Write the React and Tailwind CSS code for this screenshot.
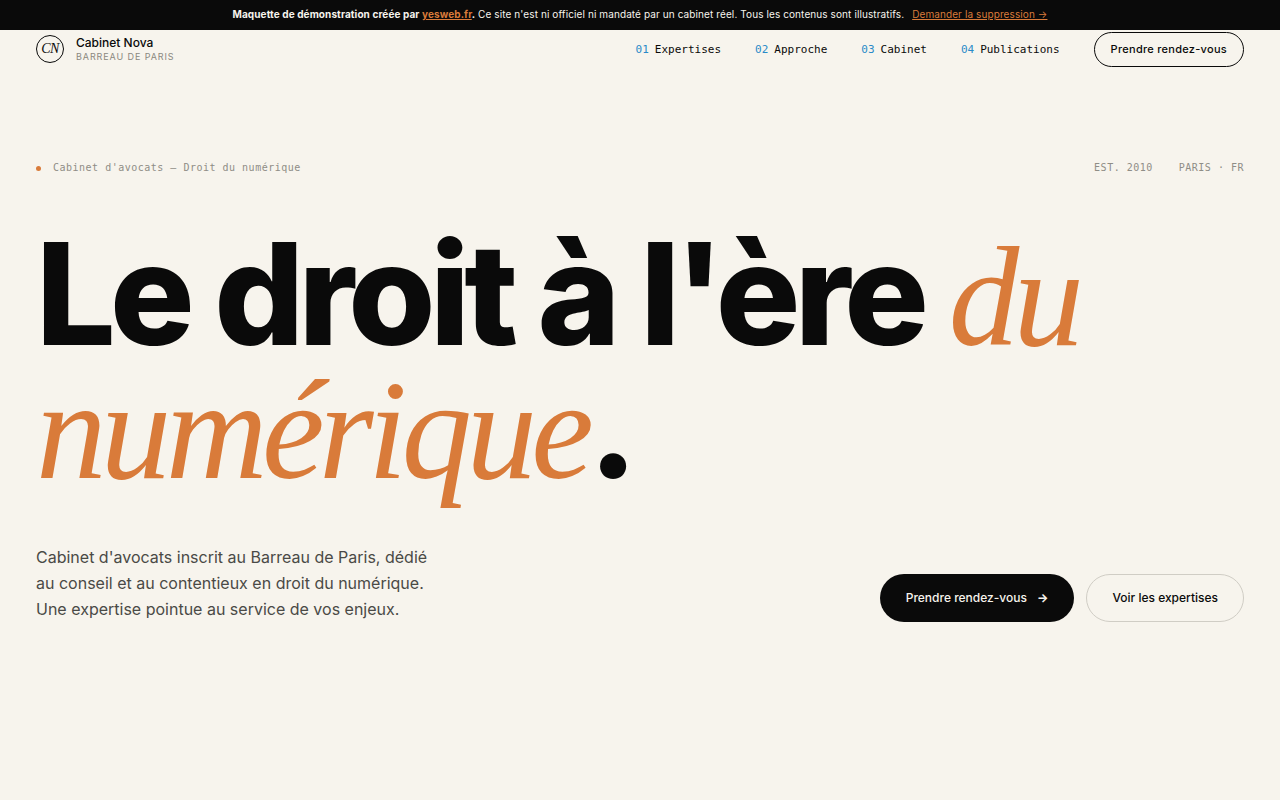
const navItems = [
  { num: "01", label: "Expertises", href: "#expertises" },
  { num: "02", label: "Approche", href: "#approche" },
  { num: "03", label: "Cabinet", href: "#cabinet" },
  { num: "04", label: "Publications", href: "#publications" },
];

function DemoBanner() {
  return (
    <div className="flex min-h-[30px] flex-wrap items-center justify-center bg-[#0a0a0a] px-4 pb-[2px] text-[10px] leading-4 tracking-[0.01em] text-[#f7f4ed]">
      <p>
        <strong className="font-bold">
          Maquette de démonstration créée par{" "}
          <a href="https://yesweb.fr" className="text-[#d97b3a] underline">
            yesweb.fr
          </a>
          .
        </strong>{" "}
        Ce site n'est ni officiel ni mandaté par un cabinet réel. Tous les contenus sont illustratifs.
      </p>
      <a href="#suppression" className="ml-2 text-[#d97b3a] underline">
        Demander la suppression →
      </a>
    </div>
  );
}

function Header() {
  return (
    <header className="flex flex-wrap items-center justify-between px-9 pt-[2px]">
      <a href="#accueil" className="flex items-center gap-3 pb-[2px]">
        <span className="flex size-7 items-center justify-center rounded-full border border-[#0a0a0a] font-['Liberation_Serif',serif] text-sm italic leading-none tracking-tighter">
          CN
        </span>
        <span className="flex flex-col">
          <span className="text-xs font-medium leading-4">Cabinet Nova</span>
          <span className="text-[9px] leading-3 tracking-widest text-[#8a8880]">BARREAU DE PARIS</span>
        </span>
      </a>
      <div className="flex flex-wrap items-center gap-[34px]">
        <nav className="flex flex-wrap items-center gap-[34px] font-['DejaVu_Sans_Mono',monospace] text-[11px] leading-4">
          {navItems.map((item) => (
            <a key={item.num} href={item.href} className="flex gap-[6px]">
              <span className="text-[#2a8ac8]">{item.num}</span>
              <span>{item.label}</span>
            </a>
          ))}
        </nav>
        <button
          type="button"
          className="h-[35px] rounded-full border border-[#0a0a0a] px-4 text-[11px] font-medium tracking-wide"
        >
          Prendre rendez-vous
        </button>
      </div>
    </header>
  );
}

function Hero() {
  return (
    <main className="px-9 pt-[93px]">
      <div className="flex flex-wrap items-center justify-between font-['DejaVu_Sans_Mono',monospace] text-[10px] leading-4 tracking-wider text-[#8f8d86]">
        <p className="flex items-center gap-3">
          <span className="size-[5px] rounded-full bg-[#d97b3a]" />
          Cabinet d'avocats — Droit du numérique
        </p>
        <p className="flex gap-[26px]">
          <span>EST. 2010</span>
          <span>PARIS · FR</span>
        </p>
      </div>

      <h1 className="mt-[53px] text-[141px] font-extrabold leading-[130px] tracking-[-0.04em]">
        Le droit à l'ère{" "}
        <em className="font-['Liberation_Serif',serif] font-normal italic text-[#d97b3a]">du numérique</em>.
      </h1>

      <div className="mt-[49px] flex flex-wrap items-end justify-between gap-6">
        <p className="max-w-[400px] text-base leading-[26px] text-[#4a4a46]">
          Cabinet d'avocats inscrit au Barreau de Paris, dédié au conseil et au contentieux en droit du
          numérique. Une expertise pointue au service de vos enjeux.
        </p>
        <div className="flex flex-wrap gap-3 text-xs font-medium">
          <button
            type="button"
            className="flex h-12 items-center gap-[10px] rounded-full bg-[#0a0a0a] px-[26px] text-[#f7f4ed]"
          >
            Prendre rendez-vous <span aria-hidden="true" className="font-bold">→</span>
          </button>
          <button type="button" className="h-12 rounded-full border border-[#d0cdc5] px-[25px]">
            Voir les expertises
          </button>
        </div>
      </div>
    </main>
  );
}

export default function App() {
  return (
    <div className="min-h-screen bg-[#f7f4ed] font-['Inter',sans-serif] text-[#0a0a0a]">
      <DemoBanner />
      <Header />
      <Hero />
    </div>
  );
}
